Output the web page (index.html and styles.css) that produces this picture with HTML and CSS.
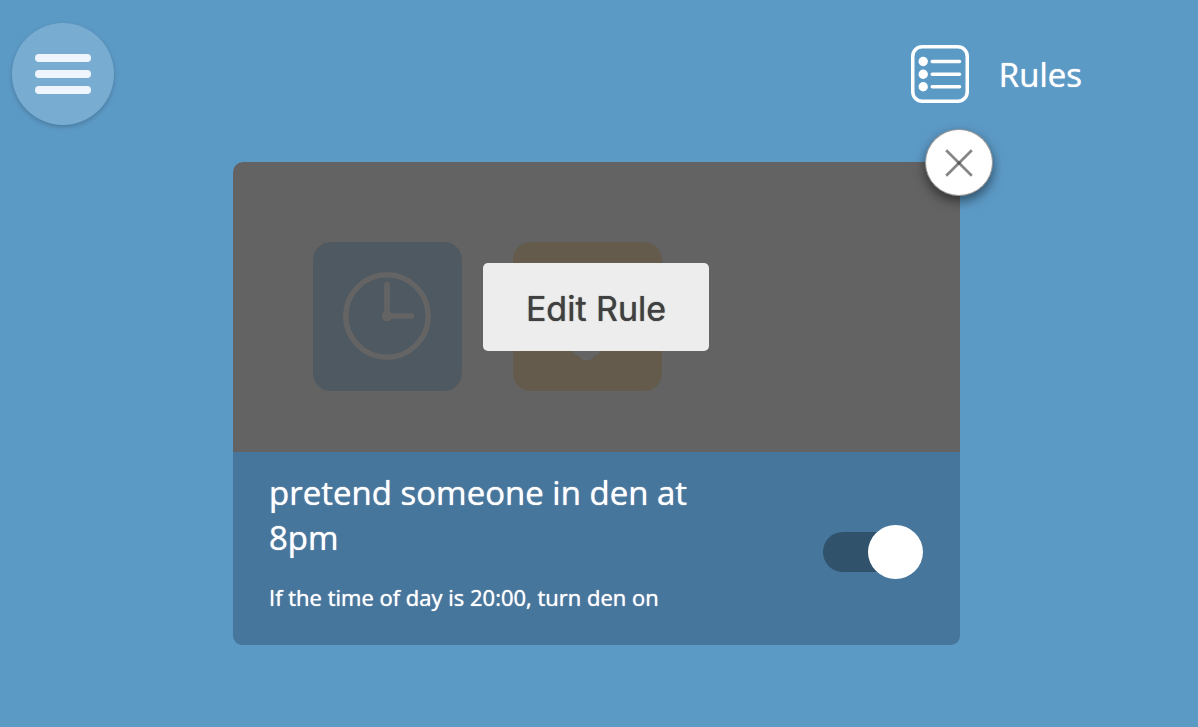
FILE: index.html
```html
<!DOCTYPE html>
<html lang="en">
<head>
<meta charset="utf-8">
<meta name="viewport" content="width=device-width, initial-scale=1">
<title>Rules</title>
<link rel="stylesheet" href="styles.css">
</head>
<body>
<header class="topbar">
  <button class="menu-button" type="button" aria-label="Menu">
    <span class="menu-bar"></span>
    <span class="menu-bar"></span>
    <span class="menu-bar"></span>
  </button>
  <h1 class="page-title">
    <svg class="rules-icon" viewBox="0 0 58 58" aria-hidden="true">
      <rect x="1.75" y="1.75" width="54.5" height="54.5" rx="9.5" fill="none" stroke="#fff" stroke-width="3.5"/>
      <g fill="#fff"><circle cx="12.2" cy="16.5" r="4.7"/><circle cx="12.2" cy="29.2" r="4.7"/><circle cx="12.2" cy="41.8" r="4.7"/></g>
      <path d="M21.3 16.5H48.5M21.3 29.2H48.5M21.3 41.8H48.5" stroke="#fff" stroke-width="3.6" stroke-linecap="round"/>
    </svg>
    <span>Rules</span>
  </h1>
</header>
<main class="content">
  <article class="card">
    <div class="preview">
      <div class="tile tile-time">
        <svg class="tile-icon" viewBox="0 0 88 88" aria-hidden="true">
          <circle cx="44" cy="44" r="41.2" fill="none" stroke="#646464" stroke-width="5.6"/>
          <path d="M44 44V12.5M44 44H68.5" stroke="#646464" stroke-width="5.6" stroke-linecap="round"/>
          <circle cx="44" cy="44" r="5.2" fill="#646464"/>
        </svg>
      </div>
      <div class="tile tile-light">
        <svg class="tile-icon" viewBox="0 0 88 88" aria-hidden="true">
          <path d="M30 70V79Q30 83 35 83.500Q39 88 41 88H46Q48 88 52 83.500Q57 83 57 79V70Z" fill="#646464"/>
        </svg>
      </div>
      <button class="edit-button" type="button">Edit Rule</button>
    </div>
    <div class="details">
      <div class="summary">
        <h2 class="rule-name">pretend someone in den at 8pm</h2>
        <p class="rule-text">If the time of day is 20:00, turn den on</p>
      </div>
      <input class="switch" type="checkbox" role="switch" aria-label="Rule enabled" checked>
    </div>
    <button class="close-button" type="button" aria-label="Close">
      <svg class="close-icon" viewBox="0 0 28 28" aria-hidden="true">
        <path d="M1.200 1.200L26.800 26.800M26.800 1.200L1.200 26.800" stroke="#666" stroke-opacity=".8" stroke-width="2.700"/>
        <circle cx="14" cy="14" r="1.800" fill="#555"/>
      </svg>
    </button>
  </article>
</main>
</body>
</html>
```
FILE: styles.css
```css
* {
  box-sizing: border-box;
}

body {
  margin: 0;
  min-height: 100vh;
  background: #5c9ac6;
  color: #fff;
  font-family: "Open Sans", "Noto Sans", sans-serif;
  text-shadow: 0 0 1px currentColor;
}

button {
  border: 0;
  padding: 0;
  cursor: pointer;
}

.topbar {
  display: flex;
  align-items: center;
  justify-content: space-between;
  padding: 23px 116px 0 12px;
}

.menu-button {
  display: flex;
  flex-direction: column;
  align-items: center;
  justify-content: center;
  gap: 8px;
  width: 102px;
  height: 102px;
  border-radius: 50%;
  background: #79acd1;
  box-shadow: 0 2px 5px rgba(0, 0, 0, 0.2);
}

.menu-bar {
  width: 56px;
  height: 8px;
  border-radius: 4px;
  background: #eff5fd;
}

.page-title {
  display: flex;
  align-items: center;
  gap: 30px;
  margin: 0;
  font-size: 33px;
  font-weight: 400;
  line-height: 45px;
}

.rules-icon {
  width: 58px;
  height: 58px;
}

.content {
  padding: 37px 5px 40px 0;
}

.card {
  position: relative;
  max-width: 727px;
  margin: 0 auto;
}

.preview {
  position: relative;
  display: flex;
  gap: 51px;
  padding: 80px 80px 61px;
  border-radius: 10px 10px 0 0;
  background: #636363;
}

.tile {
  display: flex;
  align-items: flex-start;
  justify-content: flex-start;
  width: 149px;
  height: 149px;
  padding: 30px;
  border-radius: 18px;
}

.tile-time {
  background: #4f5961;
}

.tile-light {
  background: #655b4c;
}

.tile-icon {
  flex: none;
  width: 88px;
  height: 88px;
}

.edit-button {
  position: absolute;
  top: 101px;
  left: 250px;
  width: 226px;
  height: 88px;
  padding-top: 2px;
  border-radius: 5px;
  background: #ededed;
  color: #404040;
  font-family: Inter, Roboto, sans-serif;
  font-size: 34px;
  text-shadow: 0 0 1px currentColor;
}

.details {
  display: flex;
  align-items: center;
  justify-content: space-between;
  gap: 24px;
  padding: 18px 37px 32px 36px;
  border-radius: 0 0 9px 9px;
  background: #47769c;
}

.summary {
  max-width: 440px;
}

.rule-name {
  margin: 0 0 21px;
  font-size: 33px;
  font-weight: 400;
  line-height: 45px;
}

.rule-text {
  margin: 0;
  font-size: 22px;
  line-height: 32px;
}

.switch {
  appearance: none;
  display: flex;
  align-items: center;
  flex: none;
  width: 100px;
  height: 40px;
  margin: 21px 0 0;
  border-radius: 20px;
  background: #30526a;
  cursor: pointer;
}

.switch::before {
  content: "";
  flex: none;
  width: 55px;
  height: 54px;
  border-radius: 50%;
  background: #fff;
}

.switch:checked {
  justify-content: flex-end;
}

.close-button {
  position: absolute;
  top: -33px;
  right: -33px;
  display: flex;
  align-items: center;
  justify-content: center;
  width: 68px;
  height: 67px;
  border: 1px solid #999;
  border-radius: 50%;
  background: #fff;
  box-shadow: 0 5px 12px rgba(0, 0, 0, 0.5);
}

.close-icon {
  width: 28px;
  height: 28px;
}
```
